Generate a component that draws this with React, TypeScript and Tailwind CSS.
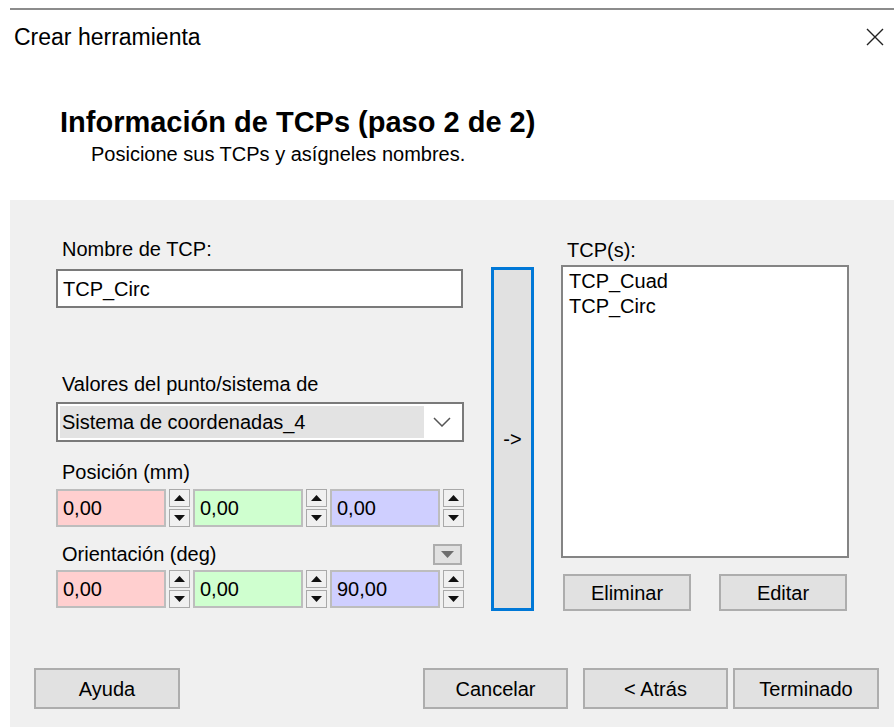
import React from 'react';

const font = { fontFamily: '"Liberation Sans", Arial, sans-serif' };

const Spin = () => (
  <div className="flex flex-col justify-between w-[21px] h-[38px] shrink-0">
    <div className="h-[18px] bg-[#f0f0f0] border-[1.5px] border-[#a9a9a9] flex items-center justify-center">
      <svg width="11" height="6" viewBox="0 0 11 6">
        <path d="M0 6 L5.5 0 L11 6Z" fill="#111" />
      </svg>
    </div>
    <div className="h-[18px] bg-[#f0f0f0] border-[1.5px] border-[#a9a9a9] flex items-center justify-center">
      <svg width="11" height="6" viewBox="0 0 11 6">
        <path d="M0 0 L5.5 6 L11 0Z" fill="#111" />
      </svg>
    </div>
  </div>
);

const Field = ({ value, color }: { value: string; color: string }) => (
  <div className={`h-[38px] w-[110px] shrink-0 border-2 border-[#bdbdbd] ${color} flex items-center pl-[5px] text-[20px] text-black`}>
    {value}
  </div>
);

const XyzRow = ({ values }: { values: string[] }) => (
  <div className="flex gap-[3px]">
    <Field value={values[0]} color="bg-[#ffcfcf]" />
    <Spin />
    <Field value={values[1]} color="bg-[#cfffcf]" />
    <Spin />
    <Field value={values[2]} color="bg-[#cfcfff]" />
    <Spin />
  </div>
);

const Btn = ({ label, w, h }: { label: string; w: string; h: string }) => (
  <div className={`${w} ${h} bg-[#e1e1e1] border-2 border-[#adadad] flex items-center justify-center text-[20px] text-black shrink-0`}>
    {label}
  </div>
);

export default function App() {
  return (
    <div className="w-[894px] h-[727px] bg-white flex flex-col overflow-hidden text-black" style={font}>
      <div className="ml-[10px] mt-[8px] h-[2px] bg-[#8c8c8c]" />

      <div className="h-[54px] flex items-center justify-between pl-[14px] pr-[10px]">
        <span className="text-[23px] leading-[28px]">Crear herramienta</span>
        <svg width="18" height="18" viewBox="0 0 18 18">
          <path d="M1 1 L17 17 M17 1 L1 17" stroke="#222" strokeWidth="1.4" />
        </svg>
      </div>

      <div className="mt-[41px] pl-[60px] text-[29px] leading-[34px] font-bold">
        Información de TCPs (paso 2 de 2)
      </div>
      <div className="mt-[3px] pl-[91px] text-[20px] leading-[24px]">
        Posicione sus TCPs y asígneles nombres.
      </div>

      <div className="mt-[34px] ml-[10px] flex-1 bg-[#f0f0f0] flex flex-col">
        <div className="flex items-start pl-[46px] pt-[37px]">
          {/* left column */}
          <div className="w-[408px] flex flex-col">
            <div className="text-[20px] leading-[24px] pl-[6px]">Nombre de TCP:</div>
            <div className="mt-[8px] h-[39px] w-[407px] bg-white border-2 border-[#7a7a7a] flex items-center pl-[5px] text-[20px]">
              TCP_Circ
            </div>

            <div className="mt-[64px] text-[20px] leading-[24px] pl-[6px]">Valores del punto/sistema de</div>
            <div className="mt-[6px] h-[40px] bg-white border-2 border-[#7a7a7a] p-[2px] flex">
              <div className="w-[364px] bg-[#e3e3e3] flex items-center pl-[2px] text-[20px]">
                Sistema de coordenadas_4
              </div>
              <div className="flex-1 flex items-center justify-center">
                <svg width="18" height="10" viewBox="0 0 18 10">
                  <path d="M1 1 L9 9 L17 1" fill="none" stroke="#555" strokeWidth="1.5" />
                </svg>
              </div>
            </div>

            <div className="mt-[18px] text-[20px] leading-[24px] pl-[6px]">Posición (mm)</div>
            <div className="mt-[5px]">
              <XyzRow values={['0,00', '0,00', '0,00']} />
            </div>

            <div className="mt-[15px] flex items-center justify-between pr-[2px]">
              <span className="text-[20px] leading-[24px] pl-[6px]">Orientación (deg)</span>
              <div className="w-[29px] h-[21px] bg-[#e1e1e1] border-2 border-[#adadad] flex items-center justify-center">
                <svg width="13" height="7" viewBox="0 0 13 7">
                  <path d="M0 0 L13 0 L6.5 7Z" fill="#6e6e6e" />
                </svg>
              </div>
            </div>
            <div className="mt-[4px]">
              <XyzRow values={['0,00', '0,00', '90,00']} />
            </div>
          </div>

          {/* arrow button */}
          <div className="ml-[27px] mt-[30px] w-[43px] h-[344px] bg-[#e1e1e1] border-[3px] border-[#0078d7] flex items-center justify-center text-[20px]">
            -&gt;
          </div>

          {/* right column */}
          <div className="ml-[27px] flex flex-col">
            <div className="mt-[1px] text-[20px] leading-[24px] pl-[6px]">TCP(s):</div>
            <div className="mt-[3px] w-[288px] h-[293px] bg-white border-2 border-[#848484] pt-[2px] pl-[6px] text-[20px] leading-[25px]">
              <div>TCP_Cuad</div>
              <div>TCP_Circ</div>
            </div>
            <div className="mt-[16px] flex gap-[28px] pl-[2px]">
              <Btn label="Eliminar" w="w-[128px]" h="h-[37px]" />
              <Btn label="Editar" w="w-[128px]" h="h-[37px]" />
            </div>
          </div>
        </div>

        <div className="mt-[57px] flex items-center pl-[24px] pr-[15px]">
          <Btn label="Ayuda" w="w-[146px]" h="h-[41px]" />
          <div className="ml-auto flex">
            <Btn label="Cancelar" w="w-[145px]" h="h-[41px]" />
            <div className="ml-[15px]">
              <Btn label="< Atrás" w="w-[145px]" h="h-[41px]" />
            </div>
            <div className="ml-[5px]">
              <Btn label="Terminado" w="w-[146px]" h="h-[41px]" />
            </div>
          </div>
        </div>
      </div>
    </div>
  );
}
